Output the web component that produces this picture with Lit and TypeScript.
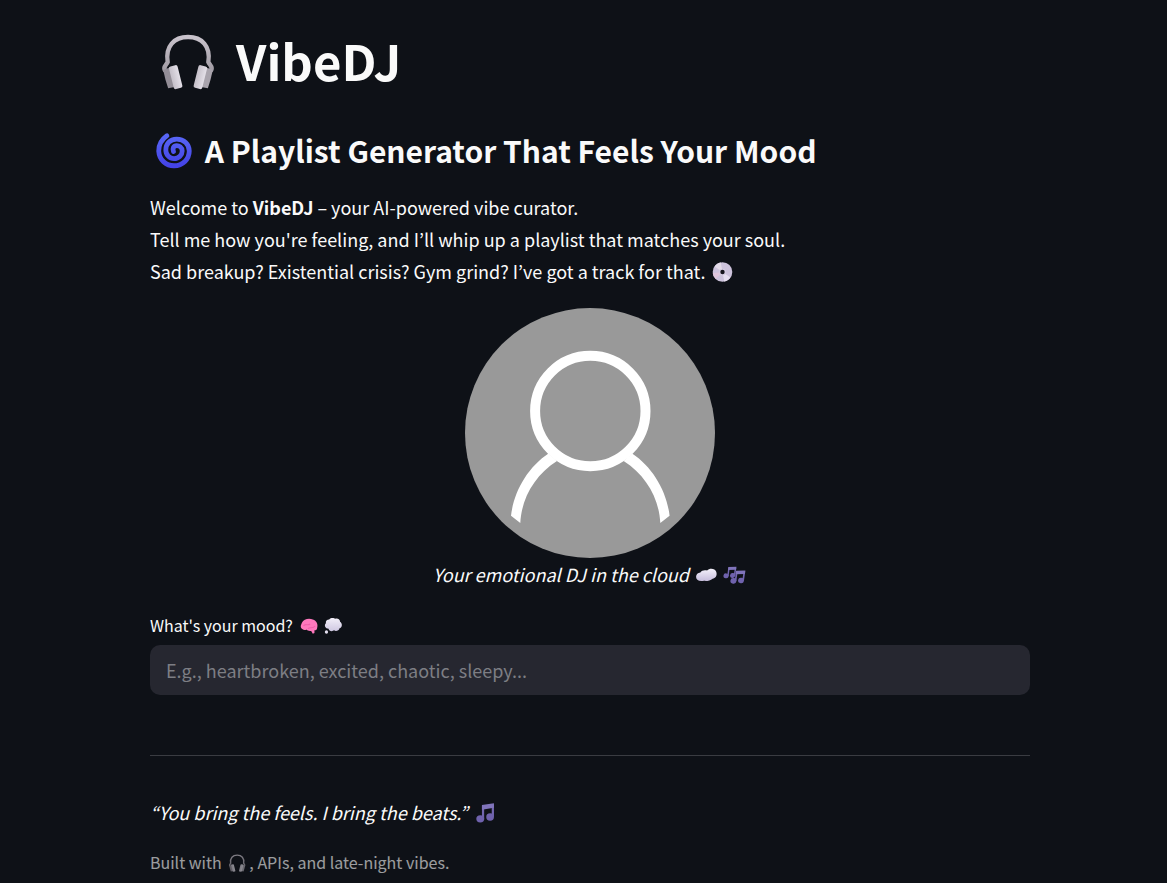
import { LitElement, html, svg, css } from "lit";
import { customElement, property } from "lit/decorators.js";

const note = svg`
  <path d="M12 25 V4 M28 22 V2" fill="none" stroke="#7266b0" stroke-width="3.600"/>
  <path d="M10.200 3 L29.800 0 V7.500 L10.200 10.500Z" fill="#8074bb"/>
  <ellipse cx="7.500" cy="25.500" rx="6.500" ry="6" fill="#6f62ad"/>
  <ellipse cx="23.500" cy="22.500" rx="6.300" ry="6" fill="#6f62ad"/>`;

const glyphs: Record<string, unknown> = {
  headphones: svg`
    <defs>
      <linearGradient id="band" x1="0" y1="0" x2="0" y2="1">
        <stop offset="0" stop-color="#c9c3cc"/><stop offset="1" stop-color="#a19ca4"/>
      </linearGradient>
      <linearGradient id="pad" x1="0" y1="0" x2="1" y2="0">
        <stop offset="0" stop-color="#c4bfc8"/><stop offset="1" stop-color="#e4e0e8"/>
      </linearGradient>
    </defs>
    <g transform="scale(.582) translate(-10 0)">
      <path d="M15 37 C12 33 16.500 31 17.500 28 C15 12 24 2.800 38 2.800 C52 2.800 61 12 58.500 28 C59.500 31 64 33 61 37" fill="none" stroke="url(#band)" stroke-width="4.400"/>
      <path d="M13 36 L21 33 L26 53 L18 54.500 Q15 46 13 36Z" fill="#938e97"/>
      <path d="M63 36 L55 33 L50 53 L58 54.500 Q61 46 63 36Z" fill="#a9a4ad"/>
      <rect x="21" y="31.500" width="9" height="23.500" rx="2" transform="rotate(-14 25.500 43)" fill="url(#pad)"/>
      <rect x="46" y="31.500" width="9" height="23.500" rx="2" transform="rotate(14 50.500 43)" fill="url(#pad)"/>
    </g>`,
  cyclone: svg`
    <defs><linearGradient id="swirl" x1="0" y1="0" x2="0" y2="1">
      <stop offset="0" stop-color="#5866f6"/><stop offset="1" stop-color="#4443e6"/>
    </linearGradient></defs>
    <path d="M9.500 2.500 C3 7 2 12 2 16.500 C2.500 25 9 30 16 30 C24 30 30 24 30 16.500 C30 10 25 5.500 18.500 5.500 C12 5.500 8.500 10.500 8.500 15.500 C8.500 20 12 23.500 16 23.500 C20.500 23.500 23.500 20 23.500 16.500 C23.500 13 20.500 11.500 18.500 11.500 C15.500 11.500 14.500 14 15.500 17"
      fill="none" stroke="url(#swirl)" stroke-width="4.400" stroke-linecap="round"/>`,
  disc: svg`
    <circle cx="16" cy="16" r="16" fill="#cdc3dc"/>
    <path d="M16 16 L3 7 A16 16 0 0 1 13 0.300Z" fill="#e4dbe9"/>
    <path d="M16 16 L29 25 A16 16 0 0 1 19 31.700Z" fill="#e6dff0"/>
    <path d="M16 16 L0 18 A16 16 0 0 0 5 27.500Z" fill="#dfc6dc"/>
    <circle cx="16" cy="16" r="5.500" fill="#d6cde2"/>
    <circle cx="16" cy="16" r="3.600" fill="#15141c"/>`,
  cloud: svg`
    <defs><linearGradient id="c" x1="0" y1="0" x2="0" y2="1">
      <stop offset="0" stop-color="#f4f1fb"/><stop offset="1" stop-color="#c6bddc"/>
    </linearGradient></defs>
    <path d="M6 12 C8 8 13 7.500 17 8.500 C21 4.500 30 5 32 11 C34 18 30 21 26 22 C22 26 15 26 12 25.500 C3 27 -1 24 -1 19 C-1 15 2 12.500 6 12Z" fill="url(#c)"/>`,
  notes: svg`
    <g transform="rotate(8 8 10) translate(0 1) scale(.66)">${note}</g>
    <g transform="rotate(8 22 20) translate(11 7) scale(.76)">${note}</g>`,
  note,
  brain: svg`
    <path d="M3 10 C6 3 16 1 23 4 C30 6 33 13 31 19 C31 23 28 24 26 24 L26 29 L23 30 L20 25 C16 26 13 24 12 23 C6 24 0 21 1 15Z" fill="#ff78bd"/>
    <path d="M6 16 C9 10 14 17 18 12 M14 21 C18 17 23 22 27 16" fill="none" stroke="#f05fab" stroke-width="2"/>`,
  thought: svg`
    <defs><linearGradient id="t" x1="0" y1="0" x2="0" y2="1">
      <stop offset="0" stop-color="#f2eff9"/><stop offset="1" stop-color="#cfc8e2"/>
    </linearGradient></defs>
    <path d="M9 4 C12 0 18 1 20 2.500 C25 1 29 4 29 8 C34 11 33 19 28 20 C27 25 21 26 18 24 C14 27 8 25 8 21 C2 21 -1 15 3 11 C2 7 5 4 9 4Z" fill="url(#t)"/>
    <circle cx="4" cy="27" r="3" fill="#e5e0f0"/>`,
};

@customElement("vibe-emoji")
class VibeEmoji extends LitElement {
  @property() name = "note";
  static styles = css`
    :host {
      display: inline-block;
      width: var(--emoji-width, 27px);
      height: var(--emoji-height, 20px);
      vertical-align: var(--emoji-align, -3px);
    }
    svg { display: block; width: 100%; height: 100%; overflow: visible; }
  `;
  render() {
    return html`<svg viewBox="-6 0 44 32" role="img" aria-label=${this.name}>${glyphs[this.name]}</svg>`;
  }
}

@customElement("app-root")
class AppRoot extends LitElement {
  static styles = css`
    :host {
      display: block;
      min-height: 100vh;
      box-sizing: border-box;
      padding: 27px 137px 0 150px;
      background: #0e1117;
      color: #fafafa;
      font: 18px/32px "Source Sans Pro", "Noto Sans CJK KR", sans-serif;
      overflow: hidden;
    }
    main { max-width: 880px; margin: 0 auto; }
    h1, h2, p, figure { margin: 0; }
    h1 {
      font-size: 49px;
      line-height: 66px;
      font-weight: 700;
      --emoji-width: 75px;
      --emoji-height: 55px;
      --emoji-align: -8px;
    }
    h2 {
      margin-top: 36px;
      font-size: 30px;
      line-height: 42px;
      font-weight: 600;
      --emoji-width: 48px;
      --emoji-height: 35px;
      --emoji-align: -5px;
    }
    .intro { margin-top: 20px; }
    figure { display: flex; flex-direction: column; align-items: center; margin-top: 21px; }
    .avatar { display: block; width: 250px; height: 250px; }
    figcaption, .quote { font-style: italic; }
    .field {
      display: flex;
      flex-direction: column;
      margin-top: 20px;
      font-size: 16px;
      line-height: 30px;
      --emoji-width: 24px;
      --emoji-height: 18px;
    }
    label { padding-bottom: 5px; }
    input {
      box-sizing: border-box;
      width: 100%;
      height: 50px;
      padding: 0 16px;
      border: 0;
      border-radius: 10px;
      background: #262730;
      color: #fafafa;
      font: inherit;
      font-size: 18px;
    }
    input::placeholder { color: #7d7e84; opacity: 1; }
    hr { margin: 60px 0 40px; border: 0; border-top: 1px solid #3a3c42; }
    .built {
      margin-top: 20px;
      font-size: 16px;
      line-height: 28px;
      opacity: 0.6;
      --emoji-width: 24px;
      --emoji-height: 18px;
    }
  `;

  render() {
    return html`<main>
      <h1><vibe-emoji name="headphones"></vibe-emoji> VibeDJ</h1>
      <h2><vibe-emoji name="cyclone"></vibe-emoji> A Playlist Generator That Feels Your Mood</h2>
      <p class="intro">
        Welcome to <strong>VibeDJ</strong> – your AI-powered vibe curator.<br />
        Tell me how you're feeling, and I’ll whip up a playlist that matches your soul.<br />
        Sad breakup? Existential crisis? Gym grind? I’ve got a track for that.
        <vibe-emoji name="disc"></vibe-emoji>
      </p>
      <figure>
        <svg class="avatar" viewBox="0 0 250 250" role="img" aria-label="Avatar">
          <circle cx="125" cy="125" r="125" fill="#999"/>
          <circle cx="125.300" cy="103" r="55.200" fill="none" stroke="#fff" stroke-width="10"/>
          <path fill="#fff" d="M46 207.700 C49 183 63 159 83.500 145.500 L92 153 C70 167 56.500 190 55.300 215Z M204.600 207.700 C201.600 183 187.600 159 167.100 145.500 L158.600 153 C180.600 167 194.100 190 195.300 215Z"/>
        </svg>
        <figcaption>Your emotional DJ in the cloud <vibe-emoji name="cloud"></vibe-emoji><vibe-emoji name="notes"></vibe-emoji></figcaption>
      </figure>
      <div class="field">
        <label for="mood">What's your mood? <vibe-emoji name="brain"></vibe-emoji><vibe-emoji name="thought"></vibe-emoji></label>
        <input id="mood" type="text" placeholder="E.g., heartbroken, excited, chaotic, sleepy..." />
      </div>
      <hr />
      <p class="quote">“You bring the feels. I bring the beats.” <vibe-emoji name="note"></vibe-emoji></p>
      <p class="built">Built with <vibe-emoji name="headphones"></vibe-emoji>, APIs, and late-night vibes.</p>
    </main>`;
  }
}
